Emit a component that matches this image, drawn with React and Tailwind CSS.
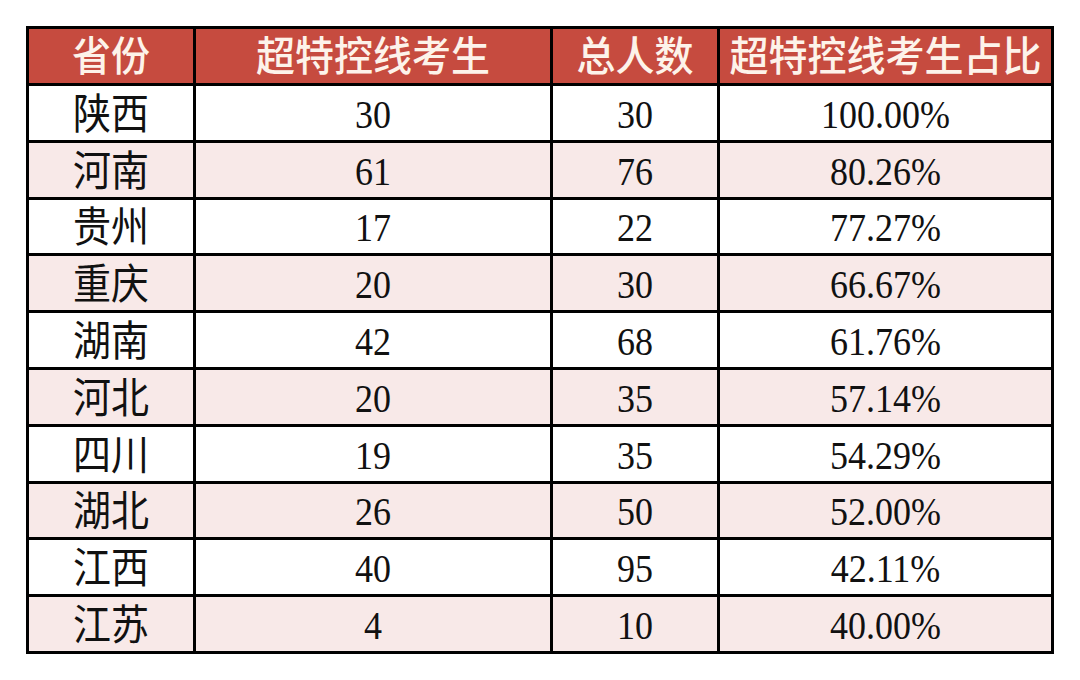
import React from "react";

const rows = [
  ["陕西", "30", "30", "100.00%"],
  ["河南", "61", "76", "80.26%"],
  ["贵州", "17", "22", "77.27%"],
  ["重庆", "20", "30", "66.67%"],
  ["湖南", "42", "68", "61.76%"],
  ["河北", "20", "35", "57.14%"],
  ["四川", "19", "35", "54.29%"],
  ["湖北", "26", "50", "52.00%"],
  ["江西", "40", "95", "42.11%"],
  ["江苏", "4", "10", "40.00%"],
];

const headers = ["省份", "超特控线考生", "总人数", "超特控线考生占比"];

const cjk = { fontFamily: '"Liberation Serif", "Noto Sans CJK SC", serif' };

export default function App() {
  return (
    <div className="w-[1080px] h-[680px] bg-white pt-[26px] pl-[26px]">
      <div
        className="grid w-[1028px] bg-black gap-[3px] p-[3px] grid-cols-[164px_354px_164px_331px] grid-rows-[54px_repeat(10,53.8px)]"
        style={cjk}
      >
        {headers.map((h) => (
          <div
            key={h}
            className="bg-[#c64b3f] text-[#fdf3ea] flex items-center justify-center text-[39px] font-medium leading-none"
          >
            <span className="inline-block scale-y-[1.05]">{h}</span>
          </div>
        ))}
        {rows.map((r, i) =>
          r.map((c, j) => (
            <div
              key={i + "-" + j}
              className={`${i % 2 === 1 ? "bg-[#f8e9e8]" : "bg-white"} text-[#111] flex items-center justify-center leading-none pt-[4px] ${
                j === 0 ? "text-[38px]" : "text-[36px]"
              }`}
            >
              <span className="inline-block scale-y-[1.1]">{c}</span>
            </div>
          ))
        )}
      </div>
    </div>
  );
}
